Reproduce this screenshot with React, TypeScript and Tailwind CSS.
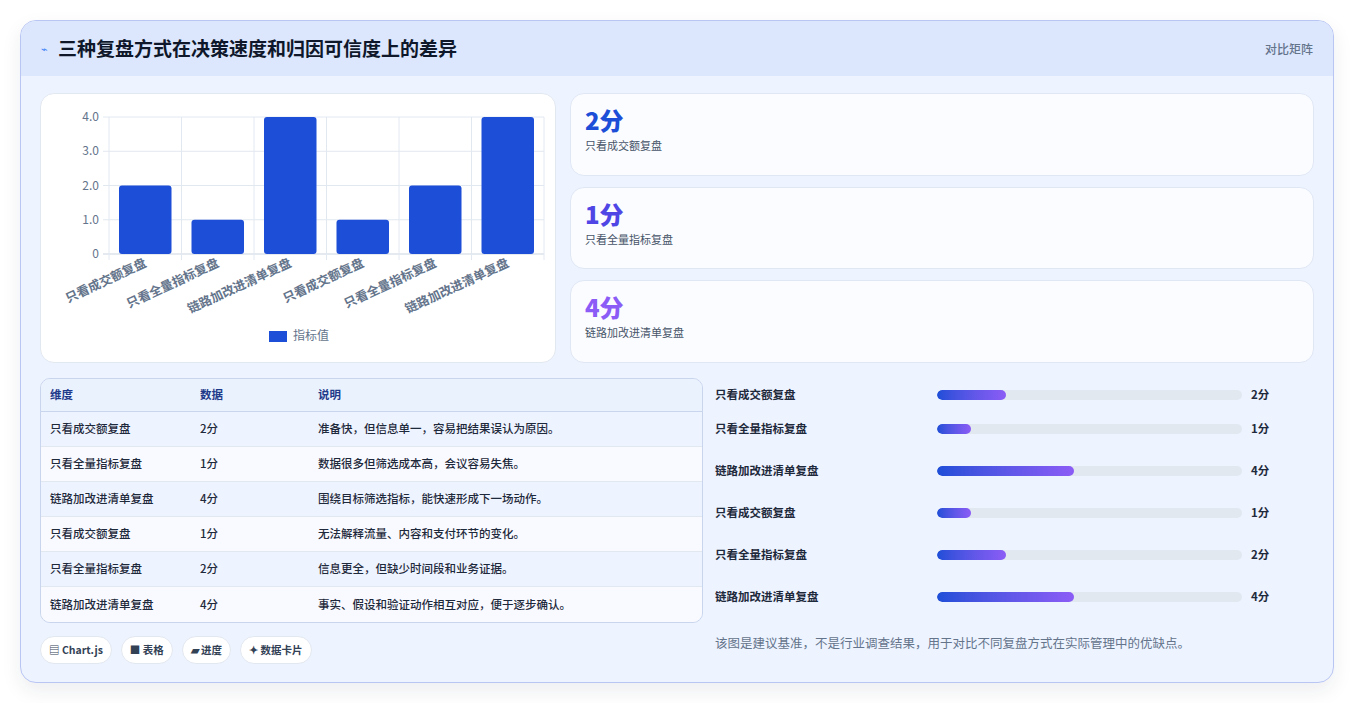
import React from "react";

const labels = ["只看成交额复盘","只看全量指标复盘","链路加改进清单复盘","只看成交额复盘","只看全量指标复盘","链路加改进清单复盘"];
const vals = [2,1,4,1,2,4];
const notes = ["准备快，但信息单一，容易把结果误认为原因。","数据很多但筛选成本高，会议容易失焦。","围绕目标筛选指标，能快速形成下一场动作。","无法解释流量、内容和支付环节的变化。","信息更全，但缺少时间段和业务证据。","事实、假设和验证动作相互对应，便于逐步确认。"];

function Chart() {
  const x0 = 68, x1 = 503, y0 = 160, y1 = 23;
  const cw = (x1 - x0) / 6;
  const unit = (y0 - y1) / 4;
  return (
    <svg width="516" height="270" viewBox="0 0 516 270">
      {[0,1,2,3,4].map(i => (
        <g key={i}>
          <line x1={x0 - 6} x2={x1} y1={y0 - i*unit} y2={y0 - i*unit} stroke={i===0?"#cbd5e1":"#e2e8f0"} />
          <text x={x0 - 10} y={y0 - i*unit + 4} textAnchor="end" fontSize="12" fill="#64748b">{i===0?"0":i+".0"}</text>
        </g>
      ))}
      {[0,1,2,3,4,5,6].map(i => (
        <line key={i} x1={x0 + i*cw} x2={x0 + i*cw} y1={y1} y2={y0 + 6} stroke="#e2e8f0" />
      ))}
      {vals.map((v,i) => {
        const bx = x0 + i*cw + 10; const h = v*unit;
        return <rect key={i} x={bx} y={y0 - h} width={cw - 20} height={h} rx="3" fill="#1d4ed8" />;
      })}
      {labels.map((l,i) => {
        const cx = x0 + i*cw + cw/2 + 2;
        return <text key={i} x={cx} y={172} textAnchor="end" fontSize="12.5" fontWeight="600" fill="#64748b" transform={`rotate(-25 ${cx} 172)`}>{l}</text>;
      })}
      <rect x="228" y="237" width="18" height="11" fill="#1d4ed8" />
      <text x="252" y="246" fontSize="12" fill="#64748b">指标值</text>
    </svg>
  );
}

export default function App() {
  const stats = [
    { v: "2分", l: "只看成交额复盘", c: "text-[#1d4ed8]" },
    { v: "1分", l: "只看全量指标复盘", c: "text-[#4f46e5]" },
    { v: "4分", l: "链路加改进清单复盘", c: "text-[#8b5cf6]" },
  ];
  const pct = [22.5, 11, 45, 11, 22.5, 45];
  return (
    <div className="w-[1354px] h-[703px] bg-white p-[20px] pb-0" style={{ fontFamily: '"Noto Sans CJK SC", "Noto Sans", sans-serif' }}>
      <div className="w-[1314px] h-[663px] rounded-[16px] border border-[#b9c6f3] bg-[#edf3ff] overflow-hidden shadow-[0_8px_20px_rgba(30,41,59,0.08)]">
        <div className="h-[55px] bg-[#dce7fe] flex items-center justify-between px-[20px]">
          <div className="flex items-center gap-[10px]">
            <span className="text-[#3b82f6] text-[11px]">⌁</span>
            <span className="text-[19px] font-bold text-[#0f172a]">三种复盘方式在决策速度和归因可信度上的差异</span>
          </div>
          <span className="text-[12px] text-[#64748b] font-medium">对比矩阵</span>
        </div>
        <div className="px-[19px] pt-[17px]">
          <div className="flex gap-[14px] h-[270px]">
            <div className="w-[516px] h-[270px] bg-white rounded-[14px] border border-[#e2e8f0]">
              <Chart />
            </div>
            <div className="flex-1 flex flex-col gap-[11px]">
              {stats.map((s,i) => (
                <div key={i} className="flex-1 bg-[#fbfcff] rounded-[14px] border border-[#dfe7f5] px-[14px] pt-[10px]">
                  <div className={`text-[24px] font-extrabold leading-[32px] ${s.c}`}>{s.v}</div>
                  <div className="text-[11px] text-[#475569] mt-[1px]">{s.l}</div>
                </div>
              ))}
            </div>
          </div>
          <div className="flex gap-[12px] mt-[15px]">
            <div className="w-[663px]">
              <div className="rounded-[10px] border border-[#c9d5ec] overflow-hidden text-[11.5px]">
                <div className="flex h-[33px] items-center bg-[#eaf2fe] border-b border-[#c9d5ec] text-[#1e3a8a] font-semibold">
                  <div className="w-[159px] pl-[9px]">维度</div>
                  <div className="w-[118px]">数据</div>
                  <div className="flex-1">说明</div>
                </div>
                {labels.map((l,i) => (
                  <div key={i} className={`flex h-[35px] items-center text-[#1e293b] font-medium ${i<5?"border-b border-[#e2e8f0]":""} ${i%2===0?"bg-[#eef4ff]":"bg-[#f8faff]"}`}>
                    <div className="w-[159px] pl-[9px]">{l}</div>
                    <div className="w-[118px]">{vals[i]}分</div>
                    <div className="flex-1">{notes[i]}</div>
                  </div>
                ))}
              </div>
              <div className="flex gap-[9px] mt-[13px] text-[10.5px] font-semibold text-[#334155]">
                {["▤ Chart.js","■ 表格","▰ 进度","✦ 数据卡片"].map((c,i)=>(
                  <div key={i} className="h-[28px] px-[8px] rounded-full bg-white border border-[#e2e8f0] flex items-center">{c}</div>
                ))}
              </div>
            </div>
            <div className="flex-1 pt-[4px]">
              {labels.map((l,i) => (
                <div key={i} className="flex items-center h-[42px] first:h-[26px] first:-mt-[0px]">
                  <div className="w-[222px] text-[11.5px] font-semibold text-[#1e293b]">{l}</div>
                  <div className="w-[305px] h-[10px] rounded-full bg-[#e2e8f0] overflow-hidden">
                    <div className="h-full rounded-full bg-gradient-to-r from-[#1d4ed8] to-[#8b5cf6]" style={{ width: pct[i] + "%" }} />
                  </div>
                  <div className="ml-[9px] text-[11.5px] font-bold text-[#1e293b]">{vals[i]}分</div>
                </div>
              ))}
              <div className="mt-[16px] text-[12.5px] text-[#64748b]">该图是建议基准，不是行业调查结果，用于对比不同复盘方式在实际管理中的优缺点。</div>
            </div>
          </div>
        </div>
      </div>
    </div>
  );
}
